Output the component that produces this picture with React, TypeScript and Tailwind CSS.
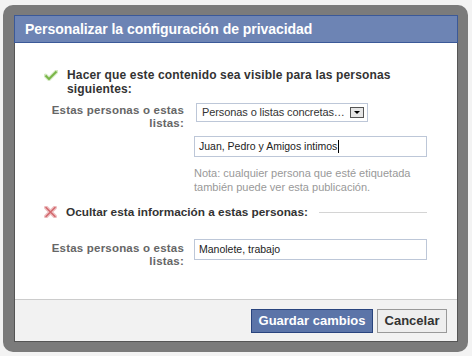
import React from 'react';

const CheckIcon = () => (
  <svg width="14" height="11" viewBox="0 0 14 11" className="shrink-0">
    <path d="M1.5 5.5 L5 9 L12.5 1.5" fill="none" stroke="#d3e8c2" strokeWidth="4" strokeLinecap="round" strokeLinejoin="round" />
    <path d="M1.5 5.5 L5 9 L12.5 1.5" fill="none" stroke="#78b545" strokeWidth="1.8" strokeLinejoin="round" />
  </svg>
);

const CrossIcon = () => (
  <svg width="13" height="12" viewBox="0 0 13 12" className="shrink-0">
    <path d="M2 1.5 L11 10.5 M11 1.5 L2 10.5" fill="none" stroke="#eec0c2" strokeWidth="4" strokeLinecap="round" />
    <path d="M2 1.5 L11 10.5 M11 1.5 L2 10.5" fill="none" stroke="#d1676c" strokeWidth="1.5" strokeLinecap="round" />
  </svg>
);

const Label = ({ children, top }: { children: React.ReactNode; top: string }) => (
  <div className={`w-[140px] shrink-0 text-right text-[11.5px] leading-[13px] font-bold text-[#666] tracking-[0.2px] ${top}`}>
    {children}
  </div>
);

export default function App() {
  return (
    <div
      className="w-[472px] h-[356px] bg-[#f3f3f3] pt-[5px] pl-[3px] overflow-hidden"
      style={{ fontFamily: '"Liberation Sans", Arial, sans-serif' }}
    >
      <div className="w-[465px] h-[347px] rounded-[10px] bg-[#7b7b7b] pt-[10px] pl-[11px]">
        <div className="w-[444px] h-[327px] flex flex-col bg-white border border-[#555]">
          {/* Header */}
          <div className="h-[28px] bg-[#6d84b4] border border-[#3b5998] -mx-px -mt-px flex items-center pl-[10px]">
            <span className="text-white font-bold text-[14px] tracking-[-0.05px]">Personalizar la configuración de privacidad</span>
          </div>

          {/* Body */}
          <div className="flex-1 pl-[29px] pr-[30px] pt-[25px]">
            <div className="flex items-start gap-[9px]">
              <div className="pt-[2px]"><CheckIcon /></div>
              <p className="text-[12px] leading-[14px] font-bold text-[#333] tracking-[0.15px]">
                Hacer que este contenido sea visible para las personas<br />siguientes:
              </p>
            </div>

            <div className="flex mt-[7px]">
              <Label top="pt-[1px]">
                Estas personas o estas<br />listas:
              </Label>
              <div className="ml-[10px] flex-1">
                <div className="w-[172px] h-[19px] border border-[#bdc7d8] bg-white flex items-center justify-between pl-[5px] pr-[3px] ml-[2px]">
                  <span className="text-[11px] text-[#333] tracking-[-0.1px]">Personas o listas concretas…</span>
                  <span className="w-[14px] h-[11px] border border-[#555] bg-[#e6e6e6] flex items-center justify-center">
                    <span className="w-0 h-0 border-l-[3px] border-r-[3px] border-t-[3px] border-l-transparent border-r-transparent border-t-black" />
                  </span>
                </div>
                <div className="mt-[14px] h-[21px] border border-[#bdc7d8] flex items-center pl-[4px]">
                  <span className="text-[10.5px] text-[#222]">Juan, Pedro y Amigos intimos</span>
                  <span className="w-px h-[13px] bg-black ml-px" />
                </div>
                <p className="mt-[9px] text-[11px] leading-[14px] text-[#999] whitespace-nowrap">
                  Nota: cualquier persona que esté etiquetada<br />también puede ver esta publicación.
                </p>
              </div>
            </div>

            <div className="flex items-center gap-[9px] mt-[11px]">
              <CrossIcon />
              <span className="text-[11.8px] leading-[14px] font-bold text-[#333] whitespace-nowrap">
                Ocultar esta información a estas personas:
              </span>
              <div className="flex-1 h-px bg-[#d4d4d4] ml-[2px]" />
            </div>

            <div className="flex mt-[20px]">
              <Label top="pt-[3px]">
                Estas personas o estas<br />listas:
              </Label>
              <div className="ml-[10px] flex-1">
                <div className="h-[21px] border border-[#bdc7d8] flex items-center pl-[4px]">
                  <span className="text-[10.5px] text-[#222]">Manolete, trabajo</span>
                </div>
              </div>
            </div>
          </div>

          {/* Footer */}
          <div className="h-[42px] bg-[#f2f2f2] border-t border-[#ccc] flex items-center justify-end gap-[4px] pr-[10px]">
            <button className="w-[122px] h-[24px] bg-[#5b74a8] border border-[#29447e] text-white font-bold text-[13px]">
              Guardar cambios
            </button>
            <button className="w-[70px] h-[24px] bg-[#eeeeee] border border-[#999] text-[#333] font-bold text-[13px]">
              Cancelar
            </button>
          </div>
        </div>
      </div>
    </div>
  );
}
